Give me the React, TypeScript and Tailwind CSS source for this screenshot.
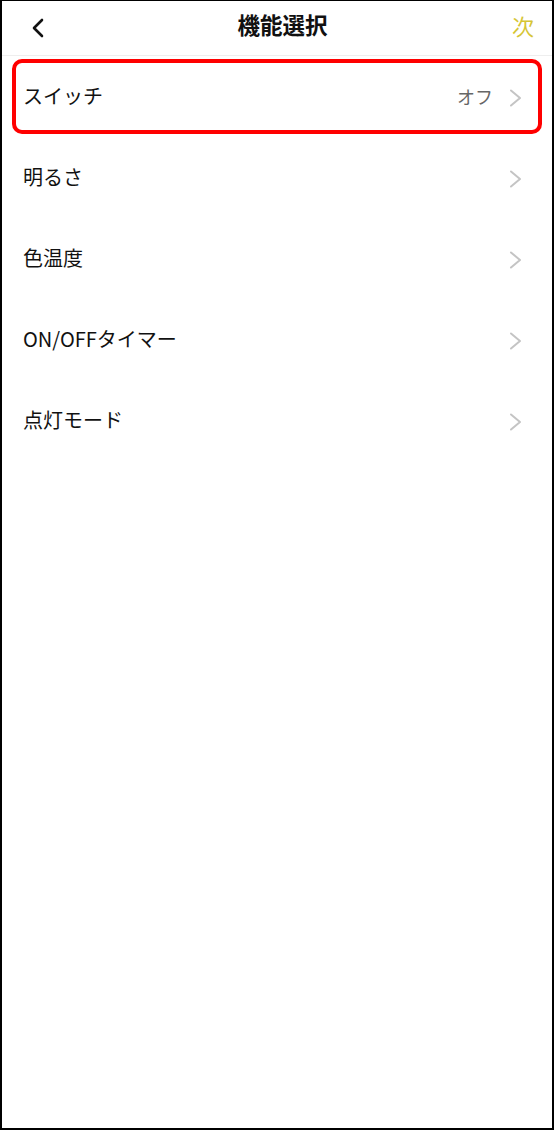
import { ReactNode } from "react"

const items = [
    { label: "スイッチ", value: "オフ" },
    { label: "明るさ" },
    { label: "色温度" },
    { label: "ON/OFFタイマー" },
    { label: "点灯モード" },
]

function Chevron() {
    return (
        <svg width="14" height="18" viewBox="0 0 14 18" fill="none" className="shrink-0">
            <polyline points="2,1.5 11,9 2,16.5" stroke="#c4c4c4" strokeWidth="2" strokeLinecap="round" strokeLinejoin="round" />
        </svg>
    )
}

function Row({ label, value, children }: { label: string; value?: string; children?: ReactNode }) {
    return (
        <div className="relative flex h-[81px] items-center pl-[21px] pr-[29px]">
            {children}
            <span className="mb-[3px] flex-1 text-[20px] text-[#111]">{label}</span>
            {value && <span className="mb-[3px] mr-[16px] text-[18px] text-[#666]">{value}</span>}
            <Chevron />
        </div>
    )
}

export default function App() {
    return (
        <div
            className="flex h-[1130px] w-[554px] flex-col border-2 border-t border-black bg-white"
            style={{ fontFamily: '"Noto Sans CJK JP", "Noto Sans", sans-serif' }}
        >
            <header className="flex h-[55px] shrink-0 items-center border-b border-[#eeeeee] pl-[29px] pr-[18px]">
                <div className="w-[60px]">
                    <svg width="14" height="20" viewBox="0 0 14 20" fill="none">
                        <polyline points="11,2 3,10 11,18" stroke="#111" strokeWidth="2.6" strokeLinecap="round" strokeLinejoin="round" />
                    </svg>
                </div>
                <h1 className="mb-[6px] flex-1 text-center text-[22.5px] font-bold text-[#111]">機能選択</h1>
                <div className="mb-[6px] w-[60px] text-right text-[22px] text-[#d6c534]">次</div>
            </header>
            <div className="pt-[1px]">
                {items.map((item, i) => (
                    <Row key={item.label} label={item.label} value={item.value}>
                        {i === 0 && (
                            <div className="pointer-events-none absolute inset-x-[10px] top-[2px] bottom-[4px] rounded-[10px] border-[4px] border-[#ff0000]" />
                        )}
                    </Row>
                ))}
            </div>
        </div>
    )
}
